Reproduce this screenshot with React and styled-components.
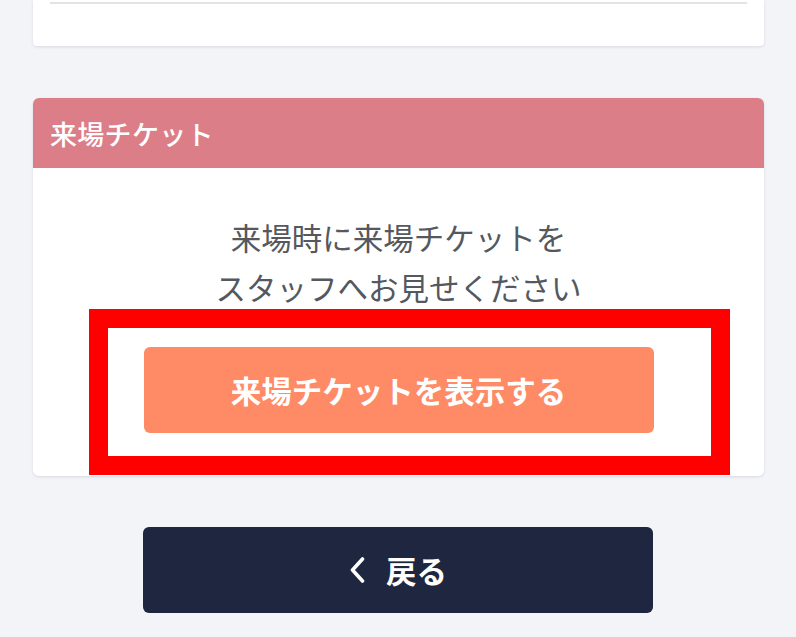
import React from "react";
import styled, { createGlobalStyle } from "styled-components";

const GlobalStyle = createGlobalStyle`
  html, body {
    margin: 0;
    padding: 0;
    background: #f3f4f8;
  }
  body {
    font-family: "Noto Sans CJK JP", "Noto Sans", sans-serif;
  }
`;

const Page = styled.div`
  width: 796px;
  height: 637px;
  overflow: hidden;
  padding: 0 32px 0 33px;
  box-sizing: border-box;
  display: flex;
  flex-direction: column;
  align-items: stretch;
`;

// 上のカード（画面外から続いている）
const Card = styled.section`
  background: #fff;
  border-radius: ${props => (props.top ? "0 0 4px 4px" : "6px")};
  box-shadow: 0 1px 3px rgba(30, 38, 64, 0.12);
`;

const TopCard = styled(Card)`
  padding: 2px 17px 42px;
`;

const Divider = styled.hr`
  margin: 0;
  border: none;
  height: 2px;
  background: #e2e3e7;
`;

const TicketCard = styled(Card)`
  margin-top: 52px;
`;

const CardHeader = styled.header`
  height: 70px;
  display: flex;
  align-items: center;
  padding: 0 17px;
  background: #dc7e88;
  border-radius: 6px 6px 0 0;
  color: #fff;
  font-size: 27px;
  font-weight: 500;
  letter-spacing: 0.3px;
`;

const CardBody = styled.div`
  padding: 44px 0 43px;
  display: flex;
  flex-direction: column;
  align-items: center;
`;

const Message = styled.p`
  margin: 0;
  text-align: center;
  font-size: 30.5px;
  line-height: 50px;
  color: #55585e;
`;

const ButtonArea = styled.div`
  position: relative;
  margin-top: 35px;
`;

const Button = styled.button`
  width: 510px;
  height: 86px;
  border: none;
  border-radius: 6px;
  background: ${props => props.bg};
  color: #fff;
  font-family: inherit;
  font-size: 30.5px;
  font-weight: 700;
  display: flex;
  align-items: center;
  justify-content: center;
  gap: 20px;
  cursor: pointer;
`;

// 赤い注釈枠
const Highlight = styled.div`
  position: absolute;
  left: -55px;
  top: -38px;
  right: -76px;
  bottom: -42px;
  border: 19px solid #ff0000;
  pointer-events: none;
`;

const Footer = styled.div`
  margin-top: 51px;
  display: flex;
  justify-content: center;
  padding-right: 1px;
`;

const Chevron = () => (
  <svg width="17" height="26" viewBox="0 0 17 26" fill="none">
    <path d="M13.5 2 L3.5 13 L13.5 24" stroke="#fff" strokeWidth="3.6" strokeLinecap="round" strokeLinejoin="round" />
  </svg>
);

export default function App() {
  return (
    <>
      <GlobalStyle />
      <Page>
        <TopCard top>
          <Divider />
        </TopCard>
        <TicketCard>
          <CardHeader>来場チケット</CardHeader>
          <CardBody>
            <Message>
              来場時に来場チケットを
              <br />
              スタッフへお見せください
            </Message>
            <ButtonArea>
              <Button bg="#ff8a66">来場チケットを表示する</Button>
              <Highlight />
            </ButtonArea>
          </CardBody>
        </TicketCard>
        <Footer>
          <Button bg="#1e2640">
            <Chevron />
            戻る
          </Button>
        </Footer>
      </Page>
    </>
  );
}
